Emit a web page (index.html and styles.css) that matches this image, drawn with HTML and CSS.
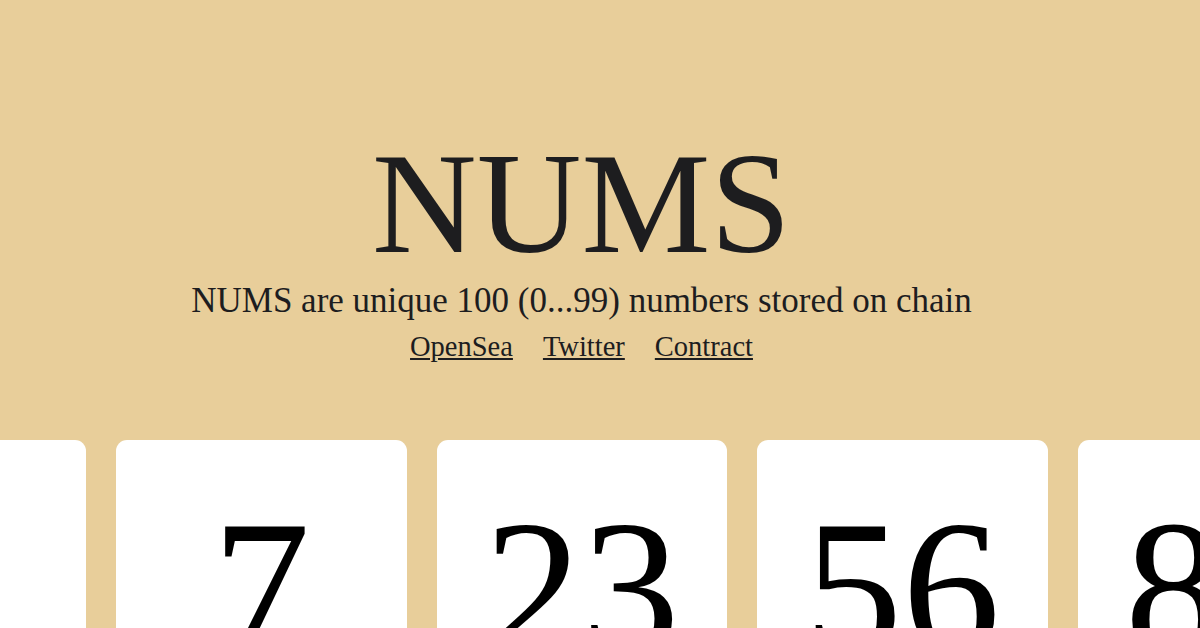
FILE: index.html
```html
<!DOCTYPE html>
<html lang="en">
<head>
<meta charset="utf-8">
<title>NUMS</title>
<link rel="stylesheet" href="styles.css">
</head>
<body>
<header class="hero">
  <h1 class="title">NUMS</h1>
  <p class="subtitle">NUMS are unique 100 (0...99) numbers stored on chain</p>
  <nav class="links">
    <a href="#">OpenSea</a>
    <a href="#">Twitter</a>
    <a href="#">Contract</a>
  </nav>
</header>
<main class="strip">
  <div class="row">
    <div class="card"><span class="num">3</span></div>
    <div class="card"><span class="num">7</span></div>
    <div class="card"><span class="num">23</span></div>
    <div class="card"><span class="num">56</span></div>
    <div class="card"><span class="num">89</span></div>
  </div>
</main>
</body>
</html>
```

FILE: styles.css
```css
html, body {
  margin: 0;
  padding: 0;
}
body {
  background: #e8ce9a;
  font-family: "Liberation Serif", "Times New Roman", serif;
  color: #1d1d1f;
  width: 1200px;
  height: 628px;
  overflow: hidden;
}
.hero {
  display: flex;
  flex-direction: column;
  align-items: center;
  width: 1163px;
  padding-top: 131px;
  height: 440px;
  box-sizing: border-box;
}
.title {
  margin: 0;
  font-size: 145px;
  line-height: 1;
  font-weight: normal;
}
.subtitle {
  margin: 7px 0 0;
  font-size: 35px;
  line-height: 1;
}
.links {
  display: flex;
  gap: 30px;
  margin-top: 15px;
  font-size: 28.5px;
  line-height: 1;
}
.links a {
  color: #1d1d1f;
  text-decoration: underline;
}
.strip {
  height: 188px;
  overflow: hidden;
}
.row {
  display: flex;
  gap: 30px;
  margin-left: -204.5px;
}
.card {
  flex: 0 0 290.5px;
  height: 290px;
  background: #ffffff;
  border-radius: 11px;
  display: flex;
  justify-content: center;
  padding-top: 50px;
  box-sizing: border-box;
}
.num {
  font-size: 196px;
  line-height: 1;
  color: #000000;
}
```
